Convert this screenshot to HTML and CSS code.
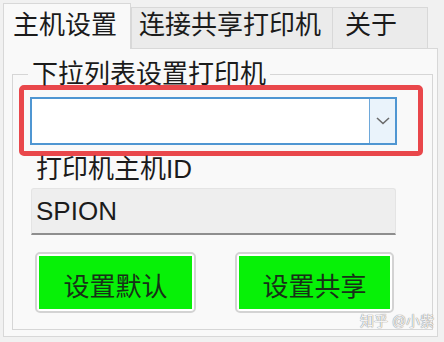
FILE: index.html
```html
<!DOCTYPE html>
<html lang="zh-CN">
<head>
<meta charset="utf-8">
<title>主机设置</title>
<link rel="stylesheet" href="styles.css">
</head>
<body>
<div class="window">
  <div class="tabs">
    <div class="tab tab-active tab-1">主机设置</div>
    <div class="tab tab-2">连接共享打印机</div>
    <div class="tab tab-3">关于</div>
  </div>
  <div class="panel">
    <fieldset class="group">
      <legend class="group-title">下拉列表设置打印机</legend>
      <div class="highlight">
        <div class="combo">
          <div class="combo-field"></div>
          <div class="combo-btn">
            <svg width="14" height="8" viewBox="0 0 14 8"><path d="M1 1 L7 6.5 L13 1" fill="none" stroke="#6a6a6a" stroke-width="1.6"/></svg>
          </div>
        </div>
      </div>
      <div class="field-label">打印机主机ID</div>
      <div class="textbox">SPION</div>
      <div class="buttons">
        <div class="btn btn-1"><span class="btn-face">设置默认</span></div>
        <div class="btn btn-2"><span class="btn-face">设置共享</span></div>
      </div>
    </fieldset>
  </div>
  <div class="watermark">知乎 @小紫</div>
</div>
</body>
</html>
```

FILE: styles.css
```css
html, body {
  margin: 0;
  padding: 0;
}
body {
  background: #f1f1f1;
  font-family: "Liberation Sans", "Noto Sans CJK SC", sans-serif;
  color: #1b1b1b;
}
.window {
  position: relative;
  width: 444px;
  height: 342px;
  box-sizing: border-box;
  padding: 3px 6px 0 3px;
}
.tabs {
  display: flex;
  align-items: flex-end;
  height: 45px;
}
.tab {
  box-sizing: border-box;
  height: 41px;
  border: 1px solid #d8d8d8;
  border-bottom: none;
  background: #ebebeb;
  font-size: 26px;
  line-height: 34px;
  white-space: nowrap;
}
.tab-active {
  position: relative;
  z-index: 1;
  height: 46px;
  margin-bottom: -1px;
  background: #f9f9f9;
  line-height: 42px;
}
.tab-1 {
  width: 128px;
  padding-left: 9px;
}
.tab-2 {
  width: 202px;
  padding-left: 7px;
}
.tab-3 {
  width: 96px;
  margin-left: -1px;
  padding-left: 12px;
}
.panel {
  box-sizing: border-box;
  width: 435px;
  border: 1px solid #d8d8d8;
  background: #f9f9f9;
  padding: 12px 4px 6px 8px;
}
.group {
  margin: 0;
  padding: 0 0 16px 0;
  min-width: 0;
  border: 1px solid #d6d6d6;
}
.group-title {
  margin-left: 15px;
  padding: 0 4px;
  font-size: 26px;
  line-height: 26px;
}
.highlight {
  margin: -2px 9px 0 6px;
  border: 5px solid #e9474b;
  border-radius: 5px;
  padding: 7px 21px 6px 6px;
}
.combo {
  display: flex;
  box-sizing: border-box;
  height: 48px;
  border: 2px solid #4f96d2;
  background: #ffffff;
}
.combo-field {
  flex: 1;
}
.combo-btn {
  width: 25px;
  border-left: 1px solid #6ea8da;
  background: #eaf3fb;
  display: flex;
  align-items: center;
  justify-content: center;
}
.field-label {
  margin: 0 0 6px 23px;
  font-size: 26px;
  line-height: 26px;
}
.textbox {
  box-sizing: border-box;
  width: 365px;
  height: 47px;
  margin-left: 18px;
  padding: 1px 0 0 4px;
  background: #eeeeee;
  border: 1px solid #e4e4e4;
  border-bottom: 2px solid #8e8e8e;
  border-radius: 3px 3px 0 0;
  font-size: 26px;
  line-height: 43px;
}
.buttons {
  display: flex;
  gap: 39px;
  margin: 17px 0 0 22px;
}
.btn {
  box-sizing: border-box;
  height: 61px;
  padding: 2px;
  border: 2px solid #d3d3d3;
  border-radius: 5px;
  background: #ffffff;
  display: flex;
}
.btn-1 {
  width: 161px;
}
.btn-2 {
  width: 159px;
}
.btn-face {
  flex: 1;
  background: #07f107;
  color: #173017;
  font-size: 26px;
  line-height: 57px;
  padding-top: 3px;
  box-sizing: border-box;
  text-align: center;
}
.watermark {
  position: absolute;
  left: 360px;
  top: 312px;
  font-size: 14px;
  line-height: 18px;
  color: rgba(255, 255, 255, 0.92);
  text-shadow: 0 0 1px #8a8a8a, 0 0 1px #8a8a8a;
  white-space: nowrap;
}
```
